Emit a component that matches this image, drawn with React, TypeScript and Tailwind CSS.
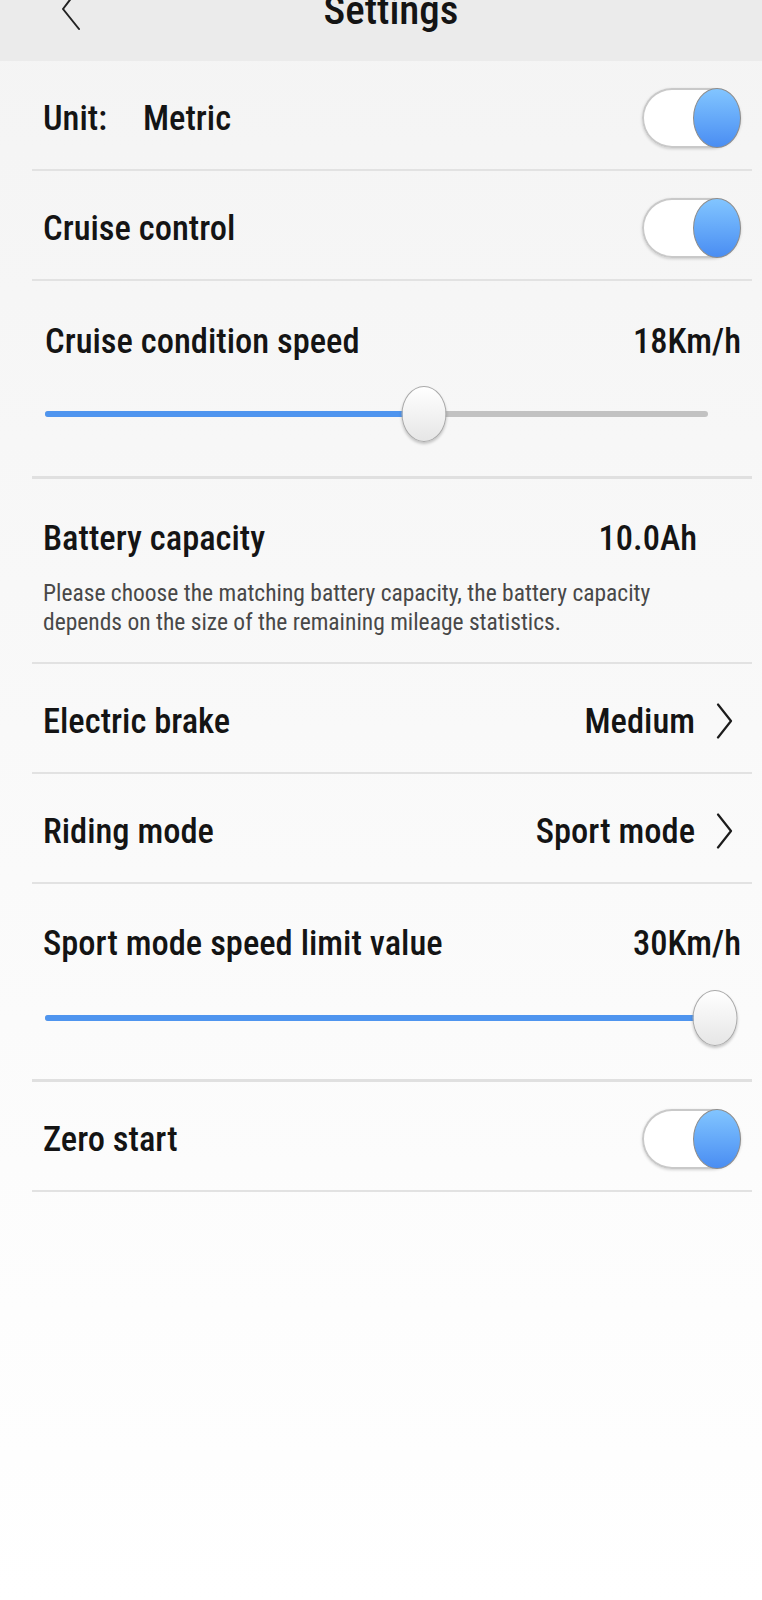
const base = "font-['Roboto_Condensed','Liberation_Sans_Narrow','Roboto',sans-serif] text-[#141414]";
const big = "text-[34.5px] font-medium leading-none";

function Toggle() {
  return (
    <div className="flex h-[60px] w-[99px] justify-end rounded-full bg-white shadow-[inset_0_0_0_2px_#c9c9c9,0_1px_3px_rgba(0,0,0,0.18)]">
      <div className="h-[60px] w-[48px] rounded-[50%] border border-[#8c8c8c] bg-linear-to-b from-[#82c5ff] to-[#4a8df2]" />
    </div>
  );
}

function Slider({ pct, fill }: { pct: number; fill: number }) {
  return (
    <div className="relative ml-[2px] h-[6px] w-[663px] rounded-full bg-[#c2c2c2]">
      <div className="h-full rounded-full bg-[#4f95ef]" style={{ width: `${fill}%` }} />
      <div
        className="absolute top-1/2 h-[56px] w-[45px] -translate-x-1/2 -translate-y-1/2 rounded-[50%] border border-[#a9a9a9] bg-linear-to-b from-white to-[#e6e6e6] shadow-[0_2px_3px_rgba(0,0,0,0.22)]"
        style={{ left: `${pct}%` }}
      />
    </div>
  );
}

function Chevron() {
  return (
    <svg width="17" height="36" viewBox="0 0 17 36" fill="none" className="ml-[21px] mr-[8px]">
      <path d="M2 1.5 L15 18 L2 34.5" stroke="#1c1c1c" strokeWidth="2.2" strokeLinecap="round" strokeLinejoin="round" />
    </svg>
  );
}

function ToggleRow({ children }: { children: React.ReactNode }) {
  return (
    <div className="ml-[32px] mr-[10px] flex h-[110px] items-center justify-between border-b-2 border-[#e2e2e2] pl-[11px] pr-[11px] pt-[6px]">
      {children}
      <Toggle />
    </div>
  );
}

function LinkRow({ label, value }: { label: string; value: string }) {
  return (
    <div className="ml-[32px] mr-[10px] flex h-[110px] items-center justify-between border-b-2 border-[#e2e2e2] pl-[11px] pr-[11px] pt-[6px]">
      <span className={big}>{label}</span>
      <div className="flex items-center">
        <span className={big}>{value}</span>
        <Chevron />
      </div>
    </div>
  );
}

export default function App() {
  return (
    <div className={`${base} min-h-[1600px] bg-linear-to-b from-[#f4f4f4] to-[#ffffff]`}>
      <header className="grid h-[61px] grid-cols-[1fr_auto_1fr] overflow-hidden bg-[#ebebeb] pl-[20px]">
        <svg width="20" height="44" viewBox="0 0 20 44" fill="none" className="-mt-[12px] ml-[41px]">
          <path d="M18 0 L2 21 L18 41" stroke="#222" strokeWidth="2" strokeLinecap="round" strokeLinejoin="round" />
        </svg>
        <h1 className="-mt-[10px] text-[41px] font-medium leading-none">Settings</h1>
        <div />
      </header>

      <ToggleRow>
        <div className={`flex items-center gap-[36px] ${big}`}>
          <span>Unit:</span>
          <span>Metric</span>
        </div>
      </ToggleRow>

      <ToggleRow>
        <span className={big}>Cruise control</span>
      </ToggleRow>

      <div className="ml-[32px] mr-[10px] h-[198px] border-b-[3px] border-[#e0e0e0] pl-[11px] pr-[11px] pt-[43px]">
        <div className={`flex items-center justify-between ${big}`}>
          <span className="ml-[2px]">Cruise condition speed</span>
          <span>18Km/h</span>
        </div>
        <div className="mt-[52px]">
          <Slider pct={57.2} fill={57.2} />
        </div>
      </div>

      <div className="ml-[32px] mr-[10px] h-[185px] border-b-2 border-[#e2e2e2] pl-[11px] pr-[55px] pt-[42px]">
        <div className={`flex items-center justify-between ${big}`}>
          <span>Battery capacity</span>
          <span>10.0Ah</span>
        </div>
        <p className="mt-[23px] text-[23.5px] leading-[29px] text-[#484848]">
          Please choose the matching battery capacity, the battery capacity depends on the size of the remaining mileage statistics.
        </p>
      </div>

      <LinkRow label="Electric brake" value="Medium" />
      <LinkRow label="Riding mode" value="Sport mode" />

      <div className="ml-[32px] mr-[10px] h-[198px] border-b-[3px] border-[#e0e0e0] pl-[11px] pr-[11px] pt-[42px]">
        <div className={`flex items-center justify-between ${big}`}>
          <span>Sport mode speed limit value</span>
          <span>30Km/h</span>
        </div>
        <div className="mt-[54px]">
          <Slider pct={101} fill={100} />
        </div>
      </div>

      <ToggleRow>
        <span className={big}>Zero start</span>
      </ToggleRow>
    </div>
  );
}
